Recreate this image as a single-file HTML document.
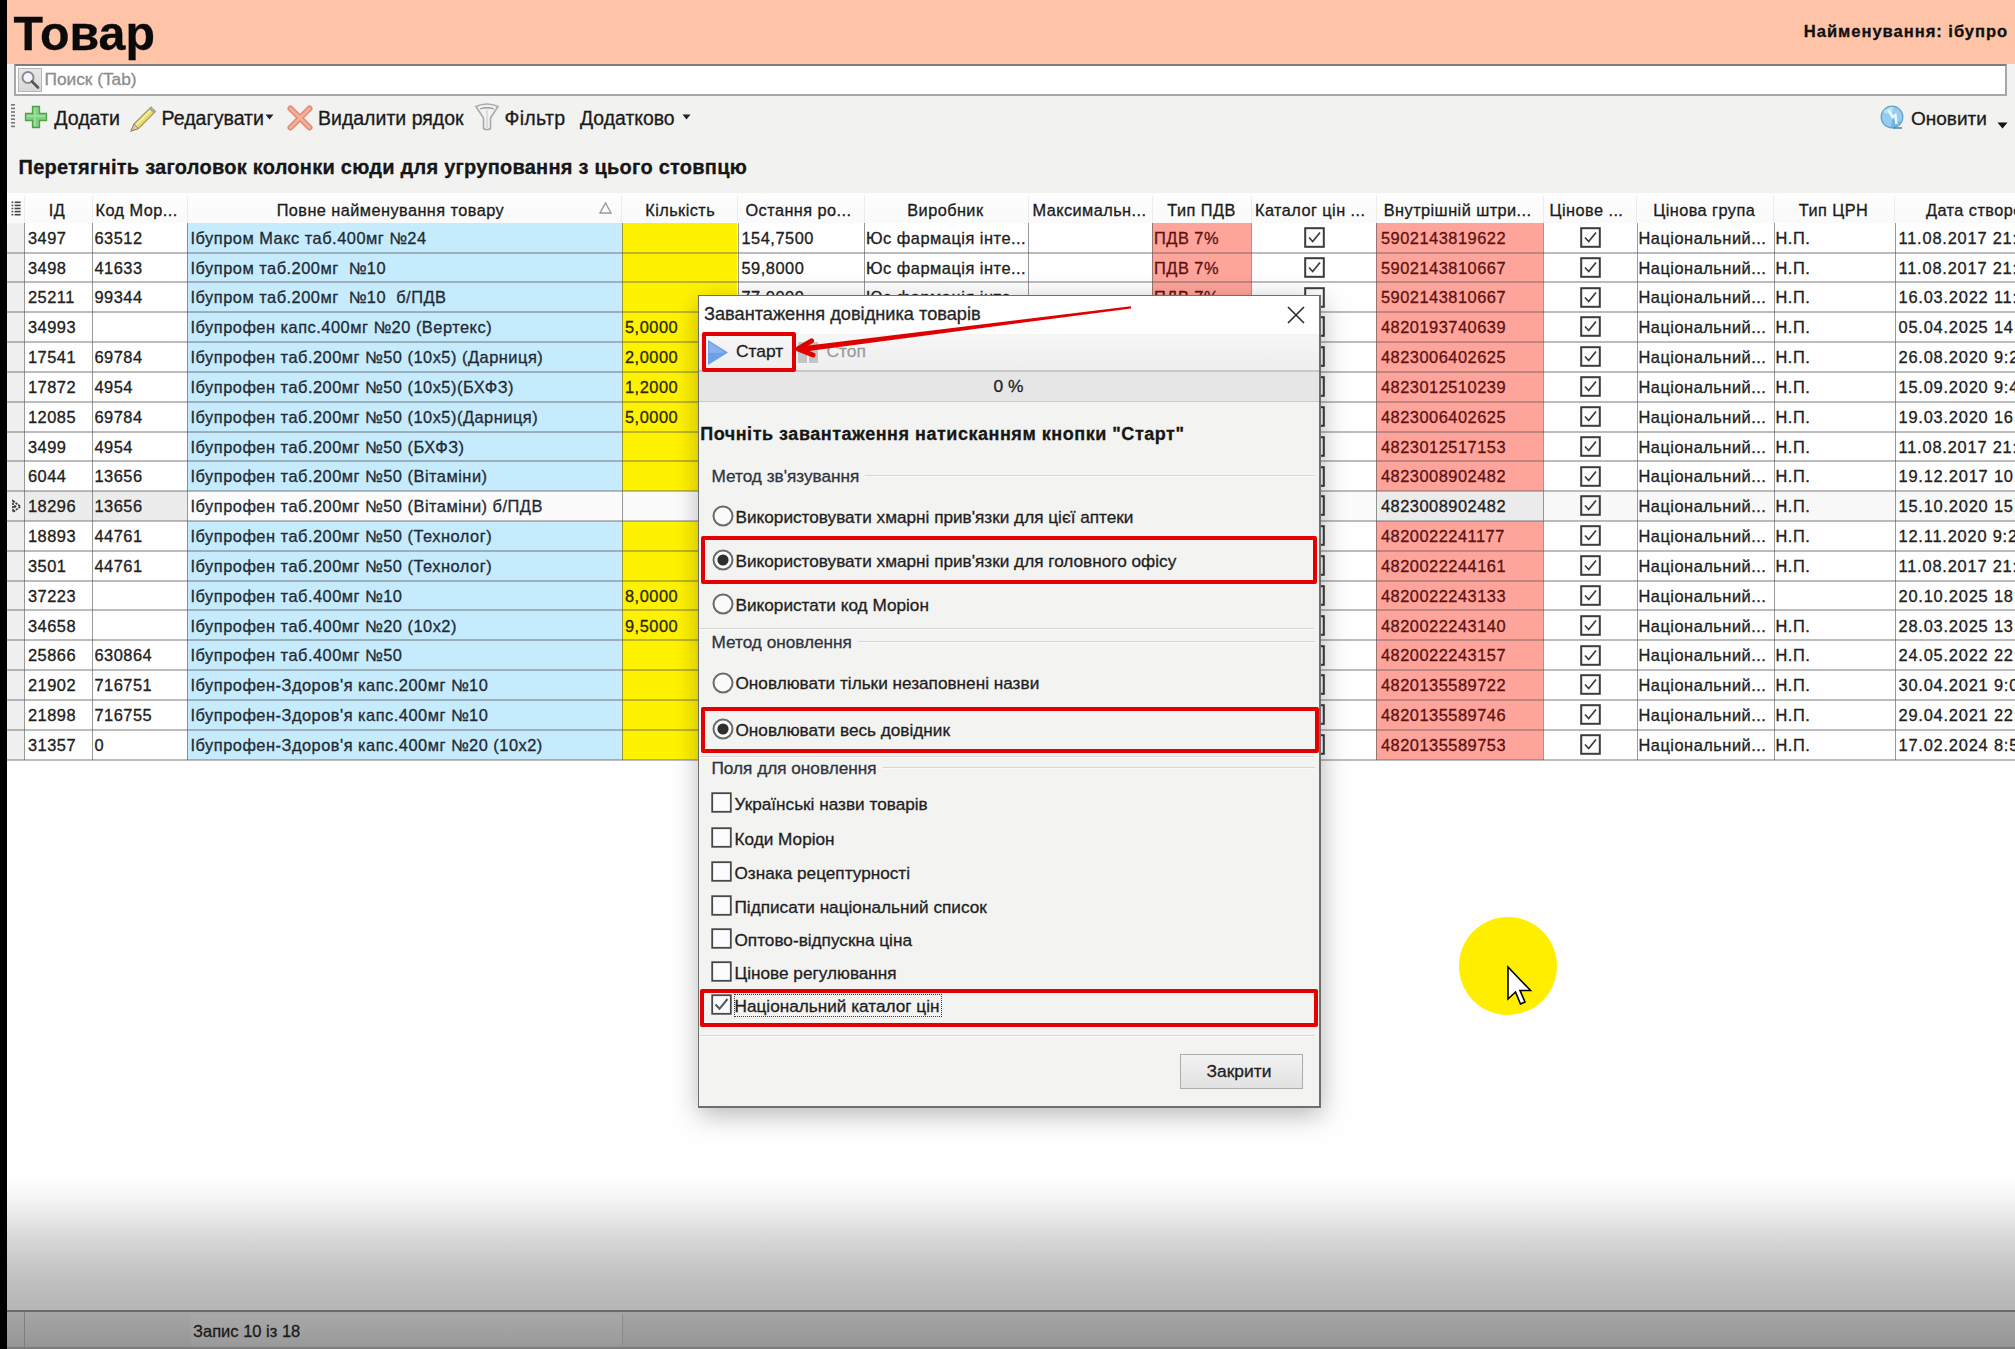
<!DOCTYPE html>
<html><head><meta charset="utf-8"><title>Товар</title>
<style>
html,body{margin:0;padding:0;}
body{width:2015px;height:1349px;position:relative;overflow:hidden;background:#fff;font-family:"Liberation Sans",sans-serif;}
#w{position:absolute;left:0;top:0;width:2015px;height:1349px;overflow:hidden;}
.t{position:absolute;white-space:pre;line-height:1;-webkit-text-stroke:0.3px currentColor;}
.g{-webkit-text-stroke:0.35px currentColor;}
.r{position:absolute;}
svg.r{overflow:visible;}
</style></head><body><div id="w">
<div class="r" style="left:7.00px;top:0.00px;width:2008.00px;height:64.00px;background:#ffc4a8"></div>
<div class="r" style="left:7.00px;top:64.00px;width:2008.00px;height:129.00px;background:#f2f2f1"></div>
<div class="r" style="left:7.00px;top:192.50px;width:2008.00px;height:1118.50px;background:#fefefe"></div>
<div class="r" style="left:7.00px;top:1176.00px;width:2008.00px;height:135.00px;background:linear-gradient(to bottom,#ffffff 0%,#f4f4f4 18%,#dedede 40%,#cacaca 62%,#bdbdbd 82%,#b5b5b5 100%)"></div>
<div class="r" style="left:7.00px;top:1310.00px;width:2008.00px;height:2.40px;background:#6a6a6a"></div>
<div class="r" style="left:7.00px;top:1312.00px;width:2008.00px;height:35.00px;background:linear-gradient(to bottom,#a6a6a6,#959595)"></div>
<div class="r" style="left:7.00px;top:1346.50px;width:2008.00px;height:2.50px;background:#7c7c7c"></div>
<div class="r" style="left:24.00px;top:1312.00px;width:1.20px;height:35.00px;background:#7f7f7f"></div>
<div class="r" style="left:190.50px;top:1314.00px;width:431.00px;height:31.00px;background:linear-gradient(to bottom,#a9a9a9,#9a9a9a);border-right:1px solid #8a8a8a"></div>
<div class="t" style="left:193.00px;top:1322.53px;font-size:16.5px;font-weight:normal;color:#1a1a1a;letter-spacing:0px;">Запис 10 із 18</div>
<div class="t" style="left:13.60px;top:9.11px;font-size:48.3px;font-weight:bold;color:#0a0a0a;letter-spacing:0px;">Товар</div>
<div class="t" style="right:6.80px;top:24.35px;font-size:16.6px;font-weight:bold;color:#111;letter-spacing:0.95px">Найменування: ібупро</div>
<div class="r" style="left:14.00px;top:64.00px;width:1993.00px;height:32.00px;background:#fff;border:2px solid #a8a8a8;border-top-color:#7d7d7d;box-sizing:border-box"></div>
<div class="r" style="left:18.00px;top:68.00px;width:24.00px;height:24.00px;background:linear-gradient(#e8e8e8,#d8d8d8);border:1px solid #b5b5b5;box-sizing:border-box"></div>
<svg class="r" style="left:18px;top:68px" width="24" height="24" viewBox="0 0 24 24"><circle cx="10" cy="9.5" r="5.5" fill="#f4f4ff" stroke="#8a8a8a" stroke-width="2"/><line x1="14" y1="13.5" x2="20" y2="19.5" stroke="#555" stroke-width="2.6" stroke-linecap="round"/></svg>
<div class="t" style="left:44.50px;top:70.66px;font-size:17.3px;font-weight:normal;color:#8c8c8c;letter-spacing:0px;">Поиск (Tab)</div>
<svg class="r" style="left:10px;top:103px" width="8" height="27" viewBox="0 0 8 27"><rect x="1" y="1.0" width="4" height="1.6" fill="#777"/><rect x="1" y="4.6" width="4" height="1.6" fill="#777"/><rect x="1" y="8.2" width="4" height="1.6" fill="#777"/><rect x="1" y="11.8" width="4" height="1.6" fill="#777"/><rect x="1" y="15.4" width="4" height="1.6" fill="#777"/><rect x="1" y="19.0" width="4" height="1.6" fill="#777"/><rect x="1" y="22.6" width="4" height="1.6" fill="#777"/></svg>
<svg class="r" style="left:24px;top:105px" width="24" height="24" viewBox="0 0 24 24"><path d="M8.5 1.5h7v7h7v7h-7v7h-7v-7h-7v-7h7z" fill="#7fd17f" stroke="#4f9f4f" stroke-width="1.3"/><path d="M11 3v18M3 11h18" stroke="#b4ecb4" stroke-width="1.4" opacity=".7"/></svg>
<div class="t" style="left:54.20px;top:108.61px;font-size:19.6px;font-weight:normal;color:#1a1a1a;letter-spacing:0px;">Додати</div>
<svg class="r" style="left:127px;top:103px" width="32" height="30" viewBox="0 0 32 30"><path d="M7 21 L24 4 L28.5 8.5 L11.5 25.5 L4 28 Z" fill="#eedc6a" stroke="#9e9462" stroke-width="1.1"/><path d="M8.5 22.5 L25.5 5.5" stroke="#f8f0a8" stroke-width="1.6"/><path d="M4 28 L7 21 L11.5 25.5 Z" fill="#dcc8a8" stroke="#8a7a60" stroke-width="0.8"/><path d="M23 5 L27.5 9.5" stroke="#a8a8a8" stroke-width="2.6"/></svg>
<div class="t" style="left:161.50px;top:108.61px;font-size:19.6px;font-weight:normal;color:#1a1a1a;letter-spacing:0px;">Редагувати</div>
<svg class="r" style="left:265px;top:114px" width="9" height="6" viewBox="0 0 9 6"><path d="M0.5 0.5h8L4.5 5.5z" fill="#222"/></svg>
<svg class="r" style="left:287px;top:105px" width="26" height="26" viewBox="0 0 26 26"><path d="M3.5 3.5 L22.5 22.5 M22.5 3.5 L3.5 22.5" stroke="#de8a74" stroke-width="6" stroke-linecap="round"/><path d="M3.5 3.5 L22.5 22.5 M22.5 3.5 L3.5 22.5" stroke="#f6ae98" stroke-width="3" stroke-linecap="round"/></svg>
<div class="t" style="left:318.00px;top:108.69px;font-size:19.5px;font-weight:normal;color:#1a1a1a;letter-spacing:0px;">Видалити рядок</div>
<svg class="r" style="left:474px;top:102px" width="26" height="30" viewBox="0 0 26 30"><path d="M2 4.5 Q13 -0.5 24 4.5 L16.5 16 L16.5 26.5 Q13 29 9.5 26.5 L9.5 16 Z" fill="#f2f2f2" stroke="#a9a9a9" stroke-width="1.6"/><path d="M6 7 Q13 4.5 20 7" fill="none" stroke="#9a9a9a" stroke-width="1.3"/><path d="M13 8 L13 26" stroke="#dcdcdc" stroke-width="2"/></svg>
<div class="t" style="left:504.50px;top:108.61px;font-size:19.6px;font-weight:normal;color:#1a1a1a;letter-spacing:0.3px;">Фільтр</div>
<div class="t" style="left:580.00px;top:108.78px;font-size:19.4px;font-weight:normal;color:#1a1a1a;letter-spacing:0px;">Додатково</div>
<svg class="r" style="left:682px;top:114px" width="9" height="6" viewBox="0 0 9 6"><path d="M0.5 0.5h8L4.5 5.5z" fill="#222"/></svg>
<svg class="r" style="left:1879px;top:104px" width="26" height="26" viewBox="0 0 26 26"><circle cx="13" cy="13" r="10.8" fill="#94cdee" stroke="#6aa2c4" stroke-width="1.3"/><path d="M4 8 Q8 3 14 3 L13 11 Z" fill="#b4e2fb"/><path d="M22 18 Q18 23 12 23 L13 15 Z" fill="#6fb6e4"/><path d="M9.5 6 L13.5 13 L16.5 11 L17.5 20" stroke="#eef8ff" stroke-width="2.4" fill="none"/><path d="M14 24 L23 24" stroke="#4f8aa8" stroke-width="1.6"/></svg>
<div class="t" style="left:1911.00px;top:109.12px;font-size:19px;font-weight:normal;color:#1a1a1a;letter-spacing:0px;">Оновити</div>
<svg class="r" style="left:1997px;top:122px" width="11" height="7" viewBox="0 0 11 7"><path d="M0.5 0.5h10L5.5 6.5z" fill="#111"/></svg>
<div class="t" style="left:18.50px;top:156.97px;font-size:20px;font-weight:bold;color:#161616;letter-spacing:0.25px;">Перетягніть заголовок колонки сюди для угруповання з цього стовпцю</div>
<div class="r" style="left:7.00px;top:192.50px;width:2008.00px;height:30.40px;background:linear-gradient(#fdfdfd,#fafafa)"></div>
<div class="r" style="left:23.50px;top:195.50px;width:1.00px;height:27.40px;background:#ececec"></div>
<div class="r" style="left:91.50px;top:195.50px;width:1.00px;height:27.40px;background:#ececec"></div>
<div class="r" style="left:186.50px;top:195.50px;width:1.00px;height:27.40px;background:#ececec"></div>
<div class="r" style="left:621.10px;top:195.50px;width:1.00px;height:27.40px;background:#ececec"></div>
<div class="r" style="left:737.00px;top:195.50px;width:1.00px;height:27.40px;background:#ececec"></div>
<div class="r" style="left:863.50px;top:195.50px;width:1.00px;height:27.40px;background:#ececec"></div>
<div class="r" style="left:1027.70px;top:195.50px;width:1.00px;height:27.40px;background:#ececec"></div>
<div class="r" style="left:1151.70px;top:195.50px;width:1.00px;height:27.40px;background:#ececec"></div>
<div class="r" style="left:1250.50px;top:195.50px;width:1.00px;height:27.40px;background:#ececec"></div>
<div class="r" style="left:1375.70px;top:195.50px;width:1.00px;height:27.40px;background:#ececec"></div>
<div class="r" style="left:1542.50px;top:195.50px;width:1.00px;height:27.40px;background:#ececec"></div>
<div class="r" style="left:1636.10px;top:195.50px;width:1.00px;height:27.40px;background:#ececec"></div>
<div class="r" style="left:1773.20px;top:195.50px;width:1.00px;height:27.40px;background:#ececec"></div>
<div class="r" style="left:1894.20px;top:195.50px;width:1.00px;height:27.40px;background:#ececec"></div>
<div class="t" style="left:-243.00px;width:600px;text-align:center;top:201.50px;font-size:16.3px;font-weight:normal;color:#1a1a1a;letter-spacing:0.45px">ІД</div>
<div class="t" style="left:95.50px;top:201.50px;font-size:16.3px;font-weight:normal;color:#1a1a1a;letter-spacing:0.45px;">Код Мор...</div>
<div class="t" style="left:90.40px;width:600px;text-align:center;top:201.50px;font-size:16.3px;font-weight:normal;color:#1a1a1a;letter-spacing:0.45px">Повне найменування товару</div>
<svg class="r" style="left:599px;top:202px" width="13" height="12" viewBox="0 0 13 12"><path d="M6.5 1 L12 11 L1 11 Z" fill="none" stroke="#9a9a9a" stroke-width="1.4"/></svg>
<div class="t" style="left:380.20px;width:600px;text-align:center;top:201.50px;font-size:16.3px;font-weight:normal;color:#1a1a1a;letter-spacing:0.45px">Кількість</div>
<div class="t" style="left:745.50px;top:201.50px;font-size:16.3px;font-weight:normal;color:#1a1a1a;letter-spacing:0.45px;">Остання ро...</div>
<div class="t" style="left:645.40px;width:600px;text-align:center;top:201.50px;font-size:16.3px;font-weight:normal;color:#1a1a1a;letter-spacing:0.45px">Виробник</div>
<div class="t" style="left:1032.50px;top:201.50px;font-size:16.3px;font-weight:normal;color:#1a1a1a;letter-spacing:0.45px;">Максимальн...</div>
<div class="t" style="left:901.50px;width:600px;text-align:center;top:201.50px;font-size:16.3px;font-weight:normal;color:#1a1a1a;letter-spacing:0.45px">Тип ПДВ</div>
<div class="t" style="left:1255.00px;top:201.50px;font-size:16.3px;font-weight:normal;color:#1a1a1a;letter-spacing:0.45px;">Каталог цін ...</div>
<div class="t" style="left:1383.80px;top:201.50px;font-size:16.3px;font-weight:normal;color:#1a1a1a;letter-spacing:0.45px;">Внутрішній штри...</div>
<div class="t" style="left:1549.50px;top:201.50px;font-size:16.3px;font-weight:normal;color:#1a1a1a;letter-spacing:0.45px;">Цінове ...</div>
<div class="t" style="left:1404.20px;width:600px;text-align:center;top:201.50px;font-size:16.3px;font-weight:normal;color:#1a1a1a;letter-spacing:0.45px">Цінова група</div>
<div class="t" style="left:1533.50px;width:600px;text-align:center;top:201.50px;font-size:16.3px;font-weight:normal;color:#1a1a1a;letter-spacing:0.45px">Тип ЦРН</div>
<div class="t" style="left:1926.00px;top:201.50px;font-size:16.3px;font-weight:normal;color:#1a1a1a;letter-spacing:0.45px;">Дата створення</div>
<svg class="r" style="left:11px;top:201px" width="11" height="16" viewBox="0 0 11 16"><rect x="0.5" y="0.5" width="1.8" height="1.6" fill="#555"/><rect x="3.6" y="0.5" width="6" height="1.6" fill="#444"/><rect x="0.5" y="3.6" width="1.8" height="1.6" fill="#555"/><rect x="3.6" y="3.6" width="6" height="1.6" fill="#444"/><rect x="0.5" y="6.7" width="1.8" height="1.6" fill="#555"/><rect x="3.6" y="6.7" width="6" height="1.6" fill="#444"/><rect x="0.5" y="9.8" width="1.8" height="1.6" fill="#555"/><rect x="3.6" y="9.8" width="6" height="1.6" fill="#444"/><rect x="0.5" y="12.9" width="1.8" height="1.6" fill="#555"/><rect x="3.6" y="12.9" width="6" height="1.6" fill="#444"/></svg>
<div class="r" style="left:7.00px;top:222.90px;width:17.00px;height:29.83px;background:#f0f0f0"></div>
<div class="r" style="left:187.00px;top:222.90px;width:434.60px;height:29.83px;background:#c5ebfd"></div>
<div class="r" style="left:621.60px;top:222.90px;width:115.90px;height:29.83px;background:#fff200"></div>
<div class="r" style="left:1376.20px;top:222.90px;width:166.80px;height:29.83px;background:#ffa49a"></div>
<div class="r" style="left:1152.20px;top:222.90px;width:98.80px;height:29.83px;background:#ffa49a"></div>
<div class="t" style="left:28.00px;top:229.82px;font-size:16.4px;font-weight:normal;color:#202020;letter-spacing:0.5px;">3497</div>
<div class="t" style="left:94.50px;top:229.82px;font-size:16.4px;font-weight:normal;color:#202020;letter-spacing:0.5px;">63512</div>
<div class="t" style="left:190.50px;top:229.82px;font-size:16.4px;font-weight:normal;color:#1e2a34;letter-spacing:0.5px;">Ібупром Макс таб.400мг №24</div>
<div class="t" style="left:741.50px;top:229.82px;font-size:16.4px;font-weight:normal;color:#202020;letter-spacing:0.5px;">154,7500</div>
<div class="t" style="left:866.00px;top:229.82px;font-size:16.4px;font-weight:normal;color:#202020;letter-spacing:0.5px;">Юс фармація інте...</div>
<div class="t" style="left:1154.00px;top:229.82px;font-size:16.4px;font-weight:normal;color:#5c1212;letter-spacing:0.5px;">ПДВ 7%</div>
<svg class="r" style="left:1303.50px;top:226.90px" width="21" height="21" viewBox="0 0 21 21"><rect x="1.2" y="1.2" width="18.6" height="18.6" fill="none" stroke="#3c3c3c" stroke-width="2"/><path d="M5 10.5 L8.7 14.5 L16 5.5" fill="none" stroke="#3c3c3c" stroke-width="1.7"/></svg>
<div class="t" style="left:1381.00px;top:229.82px;font-size:16.4px;font-weight:normal;color:#5c1212;letter-spacing:0.5px;">5902143819622</div>
<svg class="r" style="left:1579.50px;top:226.90px" width="21" height="21" viewBox="0 0 21 21"><rect x="1.2" y="1.2" width="18.6" height="18.6" fill="none" stroke="#3c3c3c" stroke-width="2"/><path d="M5 10.5 L8.7 14.5 L16 5.5" fill="none" stroke="#3c3c3c" stroke-width="1.7"/></svg>
<div class="t" style="left:1638.50px;top:229.82px;font-size:16.4px;font-weight:normal;color:#202020;letter-spacing:0.5px;">Національний...</div>
<div class="t" style="left:1775.50px;top:229.82px;font-size:16.4px;font-weight:normal;color:#202020;letter-spacing:0.5px;">Н.П.</div>
<div class="t" style="left:1898.50px;top:229.82px;font-size:16.4px;font-weight:normal;color:#202020;letter-spacing:0.8px;">11.08.2017 21:18</div>
<div class="r" style="left:7.00px;top:252.73px;width:17.00px;height:29.83px;background:#f0f0f0"></div>
<div class="r" style="left:187.00px;top:252.73px;width:434.60px;height:29.83px;background:#c5ebfd"></div>
<div class="r" style="left:621.60px;top:252.73px;width:115.90px;height:29.83px;background:#fff200"></div>
<div class="r" style="left:1376.20px;top:252.73px;width:166.80px;height:29.83px;background:#ffa49a"></div>
<div class="r" style="left:1152.20px;top:252.73px;width:98.80px;height:29.83px;background:#ffa49a"></div>
<div class="t" style="left:28.00px;top:259.65px;font-size:16.4px;font-weight:normal;color:#202020;letter-spacing:0.5px;">3498</div>
<div class="t" style="left:94.50px;top:259.65px;font-size:16.4px;font-weight:normal;color:#202020;letter-spacing:0.5px;">41633</div>
<div class="t" style="left:190.50px;top:259.65px;font-size:16.4px;font-weight:normal;color:#1e2a34;letter-spacing:0.5px;">Ібупром таб.200мг  №10</div>
<div class="t" style="left:741.50px;top:259.65px;font-size:16.4px;font-weight:normal;color:#202020;letter-spacing:0.5px;">59,8000</div>
<div class="t" style="left:866.00px;top:259.65px;font-size:16.4px;font-weight:normal;color:#202020;letter-spacing:0.5px;">Юс фармація інте...</div>
<div class="t" style="left:1154.00px;top:259.65px;font-size:16.4px;font-weight:normal;color:#5c1212;letter-spacing:0.5px;">ПДВ 7%</div>
<svg class="r" style="left:1303.50px;top:256.73px" width="21" height="21" viewBox="0 0 21 21"><rect x="1.2" y="1.2" width="18.6" height="18.6" fill="none" stroke="#3c3c3c" stroke-width="2"/><path d="M5 10.5 L8.7 14.5 L16 5.5" fill="none" stroke="#3c3c3c" stroke-width="1.7"/></svg>
<div class="t" style="left:1381.00px;top:259.65px;font-size:16.4px;font-weight:normal;color:#5c1212;letter-spacing:0.5px;">5902143810667</div>
<svg class="r" style="left:1579.50px;top:256.73px" width="21" height="21" viewBox="0 0 21 21"><rect x="1.2" y="1.2" width="18.6" height="18.6" fill="none" stroke="#3c3c3c" stroke-width="2"/><path d="M5 10.5 L8.7 14.5 L16 5.5" fill="none" stroke="#3c3c3c" stroke-width="1.7"/></svg>
<div class="t" style="left:1638.50px;top:259.65px;font-size:16.4px;font-weight:normal;color:#202020;letter-spacing:0.5px;">Національний...</div>
<div class="t" style="left:1775.50px;top:259.65px;font-size:16.4px;font-weight:normal;color:#202020;letter-spacing:0.5px;">Н.П.</div>
<div class="t" style="left:1898.50px;top:259.65px;font-size:16.4px;font-weight:normal;color:#202020;letter-spacing:0.8px;">11.08.2017 21:18</div>
<div class="r" style="left:7.00px;top:282.56px;width:17.00px;height:29.83px;background:#f0f0f0"></div>
<div class="r" style="left:187.00px;top:282.56px;width:434.60px;height:29.83px;background:#c5ebfd"></div>
<div class="r" style="left:621.60px;top:282.56px;width:115.90px;height:29.83px;background:#fff200"></div>
<div class="r" style="left:1376.20px;top:282.56px;width:166.80px;height:29.83px;background:#ffa49a"></div>
<div class="r" style="left:1152.20px;top:282.56px;width:98.80px;height:29.83px;background:#ffa49a"></div>
<div class="t" style="left:28.00px;top:289.48px;font-size:16.4px;font-weight:normal;color:#202020;letter-spacing:0.5px;">25211</div>
<div class="t" style="left:94.50px;top:289.48px;font-size:16.4px;font-weight:normal;color:#202020;letter-spacing:0.5px;">99344</div>
<div class="t" style="left:190.50px;top:289.48px;font-size:16.4px;font-weight:normal;color:#1e2a34;letter-spacing:0.5px;">Ібупром таб.200мг  №10  б/ПДВ</div>
<div class="t" style="left:741.50px;top:289.48px;font-size:16.4px;font-weight:normal;color:#202020;letter-spacing:0.5px;">77,0000</div>
<div class="t" style="left:866.00px;top:289.48px;font-size:16.4px;font-weight:normal;color:#202020;letter-spacing:0.5px;">Юс фармація інте...</div>
<div class="t" style="left:1154.00px;top:289.48px;font-size:16.4px;font-weight:normal;color:#5c1212;letter-spacing:0.5px;">ПДВ 7%</div>
<svg class="r" style="left:1303.50px;top:286.56px" width="21" height="21" viewBox="0 0 21 21"><rect x="1.2" y="1.2" width="18.6" height="18.6" fill="none" stroke="#3c3c3c" stroke-width="2"/></svg>
<div class="t" style="left:1381.00px;top:289.48px;font-size:16.4px;font-weight:normal;color:#5c1212;letter-spacing:0.5px;">5902143810667</div>
<svg class="r" style="left:1579.50px;top:286.56px" width="21" height="21" viewBox="0 0 21 21"><rect x="1.2" y="1.2" width="18.6" height="18.6" fill="none" stroke="#3c3c3c" stroke-width="2"/><path d="M5 10.5 L8.7 14.5 L16 5.5" fill="none" stroke="#3c3c3c" stroke-width="1.7"/></svg>
<div class="t" style="left:1638.50px;top:289.48px;font-size:16.4px;font-weight:normal;color:#202020;letter-spacing:0.5px;">Національний...</div>
<div class="t" style="left:1775.50px;top:289.48px;font-size:16.4px;font-weight:normal;color:#202020;letter-spacing:0.5px;">Н.П.</div>
<div class="t" style="left:1898.50px;top:289.48px;font-size:16.4px;font-weight:normal;color:#202020;letter-spacing:0.8px;">16.03.2022 11:20</div>
<div class="r" style="left:7.00px;top:312.39px;width:17.00px;height:29.83px;background:#f0f0f0"></div>
<div class="r" style="left:187.00px;top:312.39px;width:434.60px;height:29.83px;background:#c5ebfd"></div>
<div class="r" style="left:621.60px;top:312.39px;width:115.90px;height:29.83px;background:#fff200"></div>
<div class="r" style="left:1376.20px;top:312.39px;width:166.80px;height:29.83px;background:#ffa49a"></div>
<div class="t" style="left:28.00px;top:319.31px;font-size:16.4px;font-weight:normal;color:#202020;letter-spacing:0.5px;">34993</div>
<div class="t" style="left:94.50px;top:319.31px;font-size:16.4px;font-weight:normal;color:#202020;letter-spacing:0.5px;"></div>
<div class="t" style="left:190.50px;top:319.31px;font-size:16.4px;font-weight:normal;color:#1e2a34;letter-spacing:0.5px;">Ібупрофен капс.400мг №20 (Вертекс)</div>
<div class="t" style="left:625.00px;top:319.31px;font-size:16.4px;font-weight:normal;color:#2a2a00;letter-spacing:0.5px;">5,0000</div>
<svg class="r" style="left:1303.50px;top:316.39px" width="21" height="21" viewBox="0 0 21 21"><rect x="1.2" y="1.2" width="18.6" height="18.6" fill="none" stroke="#3c3c3c" stroke-width="2"/><path d="M5 10.5 L8.7 14.5 L16 5.5" fill="none" stroke="#3c3c3c" stroke-width="1.7"/></svg>
<div class="t" style="left:1381.00px;top:319.31px;font-size:16.4px;font-weight:normal;color:#5c1212;letter-spacing:0.5px;">4820193740639</div>
<svg class="r" style="left:1579.50px;top:316.39px" width="21" height="21" viewBox="0 0 21 21"><rect x="1.2" y="1.2" width="18.6" height="18.6" fill="none" stroke="#3c3c3c" stroke-width="2"/><path d="M5 10.5 L8.7 14.5 L16 5.5" fill="none" stroke="#3c3c3c" stroke-width="1.7"/></svg>
<div class="t" style="left:1638.50px;top:319.31px;font-size:16.4px;font-weight:normal;color:#202020;letter-spacing:0.5px;">Національний...</div>
<div class="t" style="left:1775.50px;top:319.31px;font-size:16.4px;font-weight:normal;color:#202020;letter-spacing:0.5px;">Н.П.</div>
<div class="t" style="left:1898.50px;top:319.31px;font-size:16.4px;font-weight:normal;color:#202020;letter-spacing:0.8px;">05.04.2025 14:20</div>
<div class="r" style="left:7.00px;top:342.22px;width:17.00px;height:29.83px;background:#f0f0f0"></div>
<div class="r" style="left:187.00px;top:342.22px;width:434.60px;height:29.83px;background:#c5ebfd"></div>
<div class="r" style="left:621.60px;top:342.22px;width:115.90px;height:29.83px;background:#fff200"></div>
<div class="r" style="left:1376.20px;top:342.22px;width:166.80px;height:29.83px;background:#ffa49a"></div>
<div class="t" style="left:28.00px;top:349.14px;font-size:16.4px;font-weight:normal;color:#202020;letter-spacing:0.5px;">17541</div>
<div class="t" style="left:94.50px;top:349.14px;font-size:16.4px;font-weight:normal;color:#202020;letter-spacing:0.5px;">69784</div>
<div class="t" style="left:190.50px;top:349.14px;font-size:16.4px;font-weight:normal;color:#1e2a34;letter-spacing:0.5px;">Ібупрофен таб.200мг №50 (10х5) (Дарниця)</div>
<div class="t" style="left:625.00px;top:349.14px;font-size:16.4px;font-weight:normal;color:#2a2a00;letter-spacing:0.5px;">2,0000</div>
<svg class="r" style="left:1303.50px;top:346.22px" width="21" height="21" viewBox="0 0 21 21"><rect x="1.2" y="1.2" width="18.6" height="18.6" fill="none" stroke="#3c3c3c" stroke-width="2"/><path d="M5 10.5 L8.7 14.5 L16 5.5" fill="none" stroke="#3c3c3c" stroke-width="1.7"/></svg>
<div class="t" style="left:1381.00px;top:349.14px;font-size:16.4px;font-weight:normal;color:#5c1212;letter-spacing:0.5px;">4823006402625</div>
<svg class="r" style="left:1579.50px;top:346.22px" width="21" height="21" viewBox="0 0 21 21"><rect x="1.2" y="1.2" width="18.6" height="18.6" fill="none" stroke="#3c3c3c" stroke-width="2"/><path d="M5 10.5 L8.7 14.5 L16 5.5" fill="none" stroke="#3c3c3c" stroke-width="1.7"/></svg>
<div class="t" style="left:1638.50px;top:349.14px;font-size:16.4px;font-weight:normal;color:#202020;letter-spacing:0.5px;">Національний...</div>
<div class="t" style="left:1775.50px;top:349.14px;font-size:16.4px;font-weight:normal;color:#202020;letter-spacing:0.5px;">Н.П.</div>
<div class="t" style="left:1898.50px;top:349.14px;font-size:16.4px;font-weight:normal;color:#202020;letter-spacing:0.8px;">26.08.2020 9:20</div>
<div class="r" style="left:7.00px;top:372.05px;width:17.00px;height:29.83px;background:#f0f0f0"></div>
<div class="r" style="left:187.00px;top:372.05px;width:434.60px;height:29.83px;background:#c5ebfd"></div>
<div class="r" style="left:621.60px;top:372.05px;width:115.90px;height:29.83px;background:#fff200"></div>
<div class="r" style="left:1376.20px;top:372.05px;width:166.80px;height:29.83px;background:#ffa49a"></div>
<div class="t" style="left:28.00px;top:378.97px;font-size:16.4px;font-weight:normal;color:#202020;letter-spacing:0.5px;">17872</div>
<div class="t" style="left:94.50px;top:378.97px;font-size:16.4px;font-weight:normal;color:#202020;letter-spacing:0.5px;">4954</div>
<div class="t" style="left:190.50px;top:378.97px;font-size:16.4px;font-weight:normal;color:#1e2a34;letter-spacing:0.5px;">Ібупрофен таб.200мг №50 (10х5)(БХФЗ)</div>
<div class="t" style="left:625.00px;top:378.97px;font-size:16.4px;font-weight:normal;color:#2a2a00;letter-spacing:0.5px;">1,2000</div>
<svg class="r" style="left:1303.50px;top:376.05px" width="21" height="21" viewBox="0 0 21 21"><rect x="1.2" y="1.2" width="18.6" height="18.6" fill="none" stroke="#3c3c3c" stroke-width="2"/><path d="M5 10.5 L8.7 14.5 L16 5.5" fill="none" stroke="#3c3c3c" stroke-width="1.7"/></svg>
<div class="t" style="left:1381.00px;top:378.97px;font-size:16.4px;font-weight:normal;color:#5c1212;letter-spacing:0.5px;">4823012510239</div>
<svg class="r" style="left:1579.50px;top:376.05px" width="21" height="21" viewBox="0 0 21 21"><rect x="1.2" y="1.2" width="18.6" height="18.6" fill="none" stroke="#3c3c3c" stroke-width="2"/><path d="M5 10.5 L8.7 14.5 L16 5.5" fill="none" stroke="#3c3c3c" stroke-width="1.7"/></svg>
<div class="t" style="left:1638.50px;top:378.97px;font-size:16.4px;font-weight:normal;color:#202020;letter-spacing:0.5px;">Національний...</div>
<div class="t" style="left:1775.50px;top:378.97px;font-size:16.4px;font-weight:normal;color:#202020;letter-spacing:0.5px;">Н.П.</div>
<div class="t" style="left:1898.50px;top:378.97px;font-size:16.4px;font-weight:normal;color:#202020;letter-spacing:0.8px;">15.09.2020 9:40</div>
<div class="r" style="left:7.00px;top:401.88px;width:17.00px;height:29.83px;background:#f0f0f0"></div>
<div class="r" style="left:187.00px;top:401.88px;width:434.60px;height:29.83px;background:#c5ebfd"></div>
<div class="r" style="left:621.60px;top:401.88px;width:115.90px;height:29.83px;background:#fff200"></div>
<div class="r" style="left:1376.20px;top:401.88px;width:166.80px;height:29.83px;background:#ffa49a"></div>
<div class="t" style="left:28.00px;top:408.80px;font-size:16.4px;font-weight:normal;color:#202020;letter-spacing:0.5px;">12085</div>
<div class="t" style="left:94.50px;top:408.80px;font-size:16.4px;font-weight:normal;color:#202020;letter-spacing:0.5px;">69784</div>
<div class="t" style="left:190.50px;top:408.80px;font-size:16.4px;font-weight:normal;color:#1e2a34;letter-spacing:0.5px;">Ібупрофен таб.200мг №50 (10х5)(Дарниця)</div>
<div class="t" style="left:625.00px;top:408.80px;font-size:16.4px;font-weight:normal;color:#2a2a00;letter-spacing:0.5px;">5,0000</div>
<svg class="r" style="left:1303.50px;top:405.88px" width="21" height="21" viewBox="0 0 21 21"><rect x="1.2" y="1.2" width="18.6" height="18.6" fill="none" stroke="#3c3c3c" stroke-width="2"/><path d="M5 10.5 L8.7 14.5 L16 5.5" fill="none" stroke="#3c3c3c" stroke-width="1.7"/></svg>
<div class="t" style="left:1381.00px;top:408.80px;font-size:16.4px;font-weight:normal;color:#5c1212;letter-spacing:0.5px;">4823006402625</div>
<svg class="r" style="left:1579.50px;top:405.88px" width="21" height="21" viewBox="0 0 21 21"><rect x="1.2" y="1.2" width="18.6" height="18.6" fill="none" stroke="#3c3c3c" stroke-width="2"/><path d="M5 10.5 L8.7 14.5 L16 5.5" fill="none" stroke="#3c3c3c" stroke-width="1.7"/></svg>
<div class="t" style="left:1638.50px;top:408.80px;font-size:16.4px;font-weight:normal;color:#202020;letter-spacing:0.5px;">Національний...</div>
<div class="t" style="left:1775.50px;top:408.80px;font-size:16.4px;font-weight:normal;color:#202020;letter-spacing:0.5px;">Н.П.</div>
<div class="t" style="left:1898.50px;top:408.80px;font-size:16.4px;font-weight:normal;color:#202020;letter-spacing:0.8px;">19.03.2020 16:20</div>
<div class="r" style="left:7.00px;top:431.71px;width:17.00px;height:29.83px;background:#f0f0f0"></div>
<div class="r" style="left:187.00px;top:431.71px;width:434.60px;height:29.83px;background:#c5ebfd"></div>
<div class="r" style="left:621.60px;top:431.71px;width:115.90px;height:29.83px;background:#fff200"></div>
<div class="r" style="left:1376.20px;top:431.71px;width:166.80px;height:29.83px;background:#ffa49a"></div>
<div class="t" style="left:28.00px;top:438.63px;font-size:16.4px;font-weight:normal;color:#202020;letter-spacing:0.5px;">3499</div>
<div class="t" style="left:94.50px;top:438.63px;font-size:16.4px;font-weight:normal;color:#202020;letter-spacing:0.5px;">4954</div>
<div class="t" style="left:190.50px;top:438.63px;font-size:16.4px;font-weight:normal;color:#1e2a34;letter-spacing:0.5px;">Ібупрофен таб.200мг №50 (БХФЗ)</div>
<svg class="r" style="left:1303.50px;top:435.71px" width="21" height="21" viewBox="0 0 21 21"><rect x="1.2" y="1.2" width="18.6" height="18.6" fill="none" stroke="#3c3c3c" stroke-width="2"/><path d="M5 10.5 L8.7 14.5 L16 5.5" fill="none" stroke="#3c3c3c" stroke-width="1.7"/></svg>
<div class="t" style="left:1381.00px;top:438.63px;font-size:16.4px;font-weight:normal;color:#5c1212;letter-spacing:0.5px;">4823012517153</div>
<svg class="r" style="left:1579.50px;top:435.71px" width="21" height="21" viewBox="0 0 21 21"><rect x="1.2" y="1.2" width="18.6" height="18.6" fill="none" stroke="#3c3c3c" stroke-width="2"/><path d="M5 10.5 L8.7 14.5 L16 5.5" fill="none" stroke="#3c3c3c" stroke-width="1.7"/></svg>
<div class="t" style="left:1638.50px;top:438.63px;font-size:16.4px;font-weight:normal;color:#202020;letter-spacing:0.5px;">Національний...</div>
<div class="t" style="left:1775.50px;top:438.63px;font-size:16.4px;font-weight:normal;color:#202020;letter-spacing:0.5px;">Н.П.</div>
<div class="t" style="left:1898.50px;top:438.63px;font-size:16.4px;font-weight:normal;color:#202020;letter-spacing:0.8px;">11.08.2017 21:18</div>
<div class="r" style="left:7.00px;top:461.54px;width:17.00px;height:29.83px;background:#f0f0f0"></div>
<div class="r" style="left:187.00px;top:461.54px;width:434.60px;height:29.83px;background:#c5ebfd"></div>
<div class="r" style="left:621.60px;top:461.54px;width:115.90px;height:29.83px;background:#fff200"></div>
<div class="r" style="left:1376.20px;top:461.54px;width:166.80px;height:29.83px;background:#ffa49a"></div>
<div class="t" style="left:28.00px;top:468.46px;font-size:16.4px;font-weight:normal;color:#202020;letter-spacing:0.5px;">6044</div>
<div class="t" style="left:94.50px;top:468.46px;font-size:16.4px;font-weight:normal;color:#202020;letter-spacing:0.5px;">13656</div>
<div class="t" style="left:190.50px;top:468.46px;font-size:16.4px;font-weight:normal;color:#1e2a34;letter-spacing:0.5px;">Ібупрофен таб.200мг №50 (Вітаміни)</div>
<svg class="r" style="left:1303.50px;top:465.54px" width="21" height="21" viewBox="0 0 21 21"><rect x="1.2" y="1.2" width="18.6" height="18.6" fill="none" stroke="#3c3c3c" stroke-width="2"/><path d="M5 10.5 L8.7 14.5 L16 5.5" fill="none" stroke="#3c3c3c" stroke-width="1.7"/></svg>
<div class="t" style="left:1381.00px;top:468.46px;font-size:16.4px;font-weight:normal;color:#5c1212;letter-spacing:0.5px;">4823008902482</div>
<svg class="r" style="left:1579.50px;top:465.54px" width="21" height="21" viewBox="0 0 21 21"><rect x="1.2" y="1.2" width="18.6" height="18.6" fill="none" stroke="#3c3c3c" stroke-width="2"/><path d="M5 10.5 L8.7 14.5 L16 5.5" fill="none" stroke="#3c3c3c" stroke-width="1.7"/></svg>
<div class="t" style="left:1638.50px;top:468.46px;font-size:16.4px;font-weight:normal;color:#202020;letter-spacing:0.5px;">Національний...</div>
<div class="t" style="left:1775.50px;top:468.46px;font-size:16.4px;font-weight:normal;color:#202020;letter-spacing:0.5px;">Н.П.</div>
<div class="t" style="left:1898.50px;top:468.46px;font-size:16.4px;font-weight:normal;color:#202020;letter-spacing:0.8px;">19.12.2017 10:20</div>
<div class="r" style="left:7.00px;top:491.37px;width:17.00px;height:29.83px;background:#f0f0f0"></div>
<div class="r" style="left:24.00px;top:491.37px;width:163.00px;height:29.83px;background:#ececec"></div>
<div class="r" style="left:187.00px;top:491.37px;width:1189.00px;height:29.83px;background:#fbfbfb"></div>
<div class="r" style="left:1376.20px;top:491.37px;width:166.80px;height:29.83px;background:#ebebeb"></div>
<div class="r" style="left:1543.00px;top:491.37px;width:472.00px;height:29.83px;background:#f8f8f8"></div>
<div class="t" style="left:28.00px;top:498.29px;font-size:16.4px;font-weight:normal;color:#202020;letter-spacing:0.5px;">18296</div>
<div class="t" style="left:94.50px;top:498.29px;font-size:16.4px;font-weight:normal;color:#202020;letter-spacing:0.5px;">13656</div>
<div class="t" style="left:190.50px;top:498.29px;font-size:16.4px;font-weight:normal;color:#1e2a34;letter-spacing:0.5px;">Ібупрофен таб.200мг №50 (Вітаміни) б/ПДВ</div>
<svg class="r" style="left:1303.50px;top:495.37px" width="21" height="21" viewBox="0 0 21 21"><rect x="1.2" y="1.2" width="18.6" height="18.6" fill="none" stroke="#3c3c3c" stroke-width="2"/><path d="M5 10.5 L8.7 14.5 L16 5.5" fill="none" stroke="#3c3c3c" stroke-width="1.7"/></svg>
<div class="t" style="left:1381.00px;top:498.29px;font-size:16.4px;font-weight:normal;color:#202020;letter-spacing:0.5px;">4823008902482</div>
<svg class="r" style="left:1579.50px;top:495.37px" width="21" height="21" viewBox="0 0 21 21"><rect x="1.2" y="1.2" width="18.6" height="18.6" fill="none" stroke="#3c3c3c" stroke-width="2"/><path d="M5 10.5 L8.7 14.5 L16 5.5" fill="none" stroke="#3c3c3c" stroke-width="1.7"/></svg>
<div class="t" style="left:1638.50px;top:498.29px;font-size:16.4px;font-weight:normal;color:#202020;letter-spacing:0.5px;">Національний...</div>
<div class="t" style="left:1775.50px;top:498.29px;font-size:16.4px;font-weight:normal;color:#202020;letter-spacing:0.5px;">Н.П.</div>
<div class="t" style="left:1898.50px;top:498.29px;font-size:16.4px;font-weight:normal;color:#202020;letter-spacing:0.8px;">15.10.2020 15:20</div>
<div class="r" style="left:7.00px;top:521.20px;width:17.00px;height:29.83px;background:#f0f0f0"></div>
<div class="r" style="left:187.00px;top:521.20px;width:434.60px;height:29.83px;background:#c5ebfd"></div>
<div class="r" style="left:621.60px;top:521.20px;width:115.90px;height:29.83px;background:#fff200"></div>
<div class="r" style="left:1376.20px;top:521.20px;width:166.80px;height:29.83px;background:#ffa49a"></div>
<div class="t" style="left:28.00px;top:528.12px;font-size:16.4px;font-weight:normal;color:#202020;letter-spacing:0.5px;">18893</div>
<div class="t" style="left:94.50px;top:528.12px;font-size:16.4px;font-weight:normal;color:#202020;letter-spacing:0.5px;">44761</div>
<div class="t" style="left:190.50px;top:528.12px;font-size:16.4px;font-weight:normal;color:#1e2a34;letter-spacing:0.5px;">Ібупрофен таб.200мг №50 (Технолог)</div>
<svg class="r" style="left:1303.50px;top:525.20px" width="21" height="21" viewBox="0 0 21 21"><rect x="1.2" y="1.2" width="18.6" height="18.6" fill="none" stroke="#3c3c3c" stroke-width="2"/><path d="M5 10.5 L8.7 14.5 L16 5.5" fill="none" stroke="#3c3c3c" stroke-width="1.7"/></svg>
<div class="t" style="left:1381.00px;top:528.12px;font-size:16.4px;font-weight:normal;color:#5c1212;letter-spacing:0.5px;">4820022241177</div>
<svg class="r" style="left:1579.50px;top:525.20px" width="21" height="21" viewBox="0 0 21 21"><rect x="1.2" y="1.2" width="18.6" height="18.6" fill="none" stroke="#3c3c3c" stroke-width="2"/><path d="M5 10.5 L8.7 14.5 L16 5.5" fill="none" stroke="#3c3c3c" stroke-width="1.7"/></svg>
<div class="t" style="left:1638.50px;top:528.12px;font-size:16.4px;font-weight:normal;color:#202020;letter-spacing:0.5px;">Національний...</div>
<div class="t" style="left:1775.50px;top:528.12px;font-size:16.4px;font-weight:normal;color:#202020;letter-spacing:0.5px;">Н.П.</div>
<div class="t" style="left:1898.50px;top:528.12px;font-size:16.4px;font-weight:normal;color:#202020;letter-spacing:0.8px;">12.11.2020 9:20</div>
<div class="r" style="left:7.00px;top:551.03px;width:17.00px;height:29.83px;background:#f0f0f0"></div>
<div class="r" style="left:187.00px;top:551.03px;width:434.60px;height:29.83px;background:#c5ebfd"></div>
<div class="r" style="left:621.60px;top:551.03px;width:115.90px;height:29.83px;background:#fff200"></div>
<div class="r" style="left:1376.20px;top:551.03px;width:166.80px;height:29.83px;background:#ffa49a"></div>
<div class="t" style="left:28.00px;top:557.95px;font-size:16.4px;font-weight:normal;color:#202020;letter-spacing:0.5px;">3501</div>
<div class="t" style="left:94.50px;top:557.95px;font-size:16.4px;font-weight:normal;color:#202020;letter-spacing:0.5px;">44761</div>
<div class="t" style="left:190.50px;top:557.95px;font-size:16.4px;font-weight:normal;color:#1e2a34;letter-spacing:0.5px;">Ібупрофен таб.200мг №50 (Технолог)</div>
<svg class="r" style="left:1303.50px;top:555.03px" width="21" height="21" viewBox="0 0 21 21"><rect x="1.2" y="1.2" width="18.6" height="18.6" fill="none" stroke="#3c3c3c" stroke-width="2"/><path d="M5 10.5 L8.7 14.5 L16 5.5" fill="none" stroke="#3c3c3c" stroke-width="1.7"/></svg>
<div class="t" style="left:1381.00px;top:557.95px;font-size:16.4px;font-weight:normal;color:#5c1212;letter-spacing:0.5px;">4820022244161</div>
<svg class="r" style="left:1579.50px;top:555.03px" width="21" height="21" viewBox="0 0 21 21"><rect x="1.2" y="1.2" width="18.6" height="18.6" fill="none" stroke="#3c3c3c" stroke-width="2"/><path d="M5 10.5 L8.7 14.5 L16 5.5" fill="none" stroke="#3c3c3c" stroke-width="1.7"/></svg>
<div class="t" style="left:1638.50px;top:557.95px;font-size:16.4px;font-weight:normal;color:#202020;letter-spacing:0.5px;">Національний...</div>
<div class="t" style="left:1775.50px;top:557.95px;font-size:16.4px;font-weight:normal;color:#202020;letter-spacing:0.5px;">Н.П.</div>
<div class="t" style="left:1898.50px;top:557.95px;font-size:16.4px;font-weight:normal;color:#202020;letter-spacing:0.8px;">11.08.2017 21:18</div>
<div class="r" style="left:7.00px;top:580.86px;width:17.00px;height:29.83px;background:#f0f0f0"></div>
<div class="r" style="left:187.00px;top:580.86px;width:434.60px;height:29.83px;background:#c5ebfd"></div>
<div class="r" style="left:621.60px;top:580.86px;width:115.90px;height:29.83px;background:#fff200"></div>
<div class="r" style="left:1376.20px;top:580.86px;width:166.80px;height:29.83px;background:#ffa49a"></div>
<div class="t" style="left:28.00px;top:587.78px;font-size:16.4px;font-weight:normal;color:#202020;letter-spacing:0.5px;">37223</div>
<div class="t" style="left:94.50px;top:587.78px;font-size:16.4px;font-weight:normal;color:#202020;letter-spacing:0.5px;"></div>
<div class="t" style="left:190.50px;top:587.78px;font-size:16.4px;font-weight:normal;color:#1e2a34;letter-spacing:0.5px;">Ібупрофен таб.400мг №10</div>
<div class="t" style="left:625.00px;top:587.78px;font-size:16.4px;font-weight:normal;color:#2a2a00;letter-spacing:0.5px;">8,0000</div>
<svg class="r" style="left:1303.50px;top:584.86px" width="21" height="21" viewBox="0 0 21 21"><rect x="1.2" y="1.2" width="18.6" height="18.6" fill="none" stroke="#3c3c3c" stroke-width="2"/><path d="M5 10.5 L8.7 14.5 L16 5.5" fill="none" stroke="#3c3c3c" stroke-width="1.7"/></svg>
<div class="t" style="left:1381.00px;top:587.78px;font-size:16.4px;font-weight:normal;color:#5c1212;letter-spacing:0.5px;">4820022243133</div>
<svg class="r" style="left:1579.50px;top:584.86px" width="21" height="21" viewBox="0 0 21 21"><rect x="1.2" y="1.2" width="18.6" height="18.6" fill="none" stroke="#3c3c3c" stroke-width="2"/><path d="M5 10.5 L8.7 14.5 L16 5.5" fill="none" stroke="#3c3c3c" stroke-width="1.7"/></svg>
<div class="t" style="left:1638.50px;top:587.78px;font-size:16.4px;font-weight:normal;color:#202020;letter-spacing:0.5px;">Національний...</div>
<div class="t" style="left:1898.50px;top:587.78px;font-size:16.4px;font-weight:normal;color:#202020;letter-spacing:0.8px;">20.10.2025 18:20</div>
<div class="r" style="left:7.00px;top:610.69px;width:17.00px;height:29.83px;background:#f0f0f0"></div>
<div class="r" style="left:187.00px;top:610.69px;width:434.60px;height:29.83px;background:#c5ebfd"></div>
<div class="r" style="left:621.60px;top:610.69px;width:115.90px;height:29.83px;background:#fff200"></div>
<div class="r" style="left:1376.20px;top:610.69px;width:166.80px;height:29.83px;background:#ffa49a"></div>
<div class="t" style="left:28.00px;top:617.61px;font-size:16.4px;font-weight:normal;color:#202020;letter-spacing:0.5px;">34658</div>
<div class="t" style="left:94.50px;top:617.61px;font-size:16.4px;font-weight:normal;color:#202020;letter-spacing:0.5px;"></div>
<div class="t" style="left:190.50px;top:617.61px;font-size:16.4px;font-weight:normal;color:#1e2a34;letter-spacing:0.5px;">Ібупрофен таб.400мг №20 (10х2)</div>
<div class="t" style="left:625.00px;top:617.61px;font-size:16.4px;font-weight:normal;color:#2a2a00;letter-spacing:0.5px;">9,5000</div>
<svg class="r" style="left:1303.50px;top:614.69px" width="21" height="21" viewBox="0 0 21 21"><rect x="1.2" y="1.2" width="18.6" height="18.6" fill="none" stroke="#3c3c3c" stroke-width="2"/><path d="M5 10.5 L8.7 14.5 L16 5.5" fill="none" stroke="#3c3c3c" stroke-width="1.7"/></svg>
<div class="t" style="left:1381.00px;top:617.61px;font-size:16.4px;font-weight:normal;color:#5c1212;letter-spacing:0.5px;">4820022243140</div>
<svg class="r" style="left:1579.50px;top:614.69px" width="21" height="21" viewBox="0 0 21 21"><rect x="1.2" y="1.2" width="18.6" height="18.6" fill="none" stroke="#3c3c3c" stroke-width="2"/><path d="M5 10.5 L8.7 14.5 L16 5.5" fill="none" stroke="#3c3c3c" stroke-width="1.7"/></svg>
<div class="t" style="left:1638.50px;top:617.61px;font-size:16.4px;font-weight:normal;color:#202020;letter-spacing:0.5px;">Національний...</div>
<div class="t" style="left:1775.50px;top:617.61px;font-size:16.4px;font-weight:normal;color:#202020;letter-spacing:0.5px;">Н.П.</div>
<div class="t" style="left:1898.50px;top:617.61px;font-size:16.4px;font-weight:normal;color:#202020;letter-spacing:0.8px;">28.03.2025 13:20</div>
<div class="r" style="left:7.00px;top:640.52px;width:17.00px;height:29.83px;background:#f0f0f0"></div>
<div class="r" style="left:187.00px;top:640.52px;width:434.60px;height:29.83px;background:#c5ebfd"></div>
<div class="r" style="left:621.60px;top:640.52px;width:115.90px;height:29.83px;background:#fff200"></div>
<div class="r" style="left:1376.20px;top:640.52px;width:166.80px;height:29.83px;background:#ffa49a"></div>
<div class="t" style="left:28.00px;top:647.44px;font-size:16.4px;font-weight:normal;color:#202020;letter-spacing:0.5px;">25866</div>
<div class="t" style="left:94.50px;top:647.44px;font-size:16.4px;font-weight:normal;color:#202020;letter-spacing:0.5px;">630864</div>
<div class="t" style="left:190.50px;top:647.44px;font-size:16.4px;font-weight:normal;color:#1e2a34;letter-spacing:0.5px;">Ібупрофен таб.400мг №50</div>
<svg class="r" style="left:1303.50px;top:644.52px" width="21" height="21" viewBox="0 0 21 21"><rect x="1.2" y="1.2" width="18.6" height="18.6" fill="none" stroke="#3c3c3c" stroke-width="2"/><path d="M5 10.5 L8.7 14.5 L16 5.5" fill="none" stroke="#3c3c3c" stroke-width="1.7"/></svg>
<div class="t" style="left:1381.00px;top:647.44px;font-size:16.4px;font-weight:normal;color:#5c1212;letter-spacing:0.5px;">4820022243157</div>
<svg class="r" style="left:1579.50px;top:644.52px" width="21" height="21" viewBox="0 0 21 21"><rect x="1.2" y="1.2" width="18.6" height="18.6" fill="none" stroke="#3c3c3c" stroke-width="2"/><path d="M5 10.5 L8.7 14.5 L16 5.5" fill="none" stroke="#3c3c3c" stroke-width="1.7"/></svg>
<div class="t" style="left:1638.50px;top:647.44px;font-size:16.4px;font-weight:normal;color:#202020;letter-spacing:0.5px;">Національний...</div>
<div class="t" style="left:1775.50px;top:647.44px;font-size:16.4px;font-weight:normal;color:#202020;letter-spacing:0.5px;">Н.П.</div>
<div class="t" style="left:1898.50px;top:647.44px;font-size:16.4px;font-weight:normal;color:#202020;letter-spacing:0.8px;">24.05.2022 22:20</div>
<div class="r" style="left:7.00px;top:670.35px;width:17.00px;height:29.83px;background:#f0f0f0"></div>
<div class="r" style="left:187.00px;top:670.35px;width:434.60px;height:29.83px;background:#c5ebfd"></div>
<div class="r" style="left:621.60px;top:670.35px;width:115.90px;height:29.83px;background:#fff200"></div>
<div class="r" style="left:1376.20px;top:670.35px;width:166.80px;height:29.83px;background:#ffa49a"></div>
<div class="t" style="left:28.00px;top:677.27px;font-size:16.4px;font-weight:normal;color:#202020;letter-spacing:0.5px;">21902</div>
<div class="t" style="left:94.50px;top:677.27px;font-size:16.4px;font-weight:normal;color:#202020;letter-spacing:0.5px;">716751</div>
<div class="t" style="left:190.50px;top:677.27px;font-size:16.4px;font-weight:normal;color:#1e2a34;letter-spacing:0.5px;">Ібупрофен-Здоров&#x27;я капс.200мг №10</div>
<svg class="r" style="left:1303.50px;top:674.35px" width="21" height="21" viewBox="0 0 21 21"><rect x="1.2" y="1.2" width="18.6" height="18.6" fill="none" stroke="#3c3c3c" stroke-width="2"/><path d="M5 10.5 L8.7 14.5 L16 5.5" fill="none" stroke="#3c3c3c" stroke-width="1.7"/></svg>
<div class="t" style="left:1381.00px;top:677.27px;font-size:16.4px;font-weight:normal;color:#5c1212;letter-spacing:0.5px;">4820135589722</div>
<svg class="r" style="left:1579.50px;top:674.35px" width="21" height="21" viewBox="0 0 21 21"><rect x="1.2" y="1.2" width="18.6" height="18.6" fill="none" stroke="#3c3c3c" stroke-width="2"/><path d="M5 10.5 L8.7 14.5 L16 5.5" fill="none" stroke="#3c3c3c" stroke-width="1.7"/></svg>
<div class="t" style="left:1638.50px;top:677.27px;font-size:16.4px;font-weight:normal;color:#202020;letter-spacing:0.5px;">Національний...</div>
<div class="t" style="left:1775.50px;top:677.27px;font-size:16.4px;font-weight:normal;color:#202020;letter-spacing:0.5px;">Н.П.</div>
<div class="t" style="left:1898.50px;top:677.27px;font-size:16.4px;font-weight:normal;color:#202020;letter-spacing:0.8px;">30.04.2021 9:00</div>
<div class="r" style="left:7.00px;top:700.18px;width:17.00px;height:29.83px;background:#f0f0f0"></div>
<div class="r" style="left:187.00px;top:700.18px;width:434.60px;height:29.83px;background:#c5ebfd"></div>
<div class="r" style="left:621.60px;top:700.18px;width:115.90px;height:29.83px;background:#fff200"></div>
<div class="r" style="left:1376.20px;top:700.18px;width:166.80px;height:29.83px;background:#ffa49a"></div>
<div class="t" style="left:28.00px;top:707.10px;font-size:16.4px;font-weight:normal;color:#202020;letter-spacing:0.5px;">21898</div>
<div class="t" style="left:94.50px;top:707.10px;font-size:16.4px;font-weight:normal;color:#202020;letter-spacing:0.5px;">716755</div>
<div class="t" style="left:190.50px;top:707.10px;font-size:16.4px;font-weight:normal;color:#1e2a34;letter-spacing:0.5px;">Ібупрофен-Здоров&#x27;я капс.400мг №10</div>
<svg class="r" style="left:1303.50px;top:704.18px" width="21" height="21" viewBox="0 0 21 21"><rect x="1.2" y="1.2" width="18.6" height="18.6" fill="none" stroke="#3c3c3c" stroke-width="2"/><path d="M5 10.5 L8.7 14.5 L16 5.5" fill="none" stroke="#3c3c3c" stroke-width="1.7"/></svg>
<div class="t" style="left:1381.00px;top:707.10px;font-size:16.4px;font-weight:normal;color:#5c1212;letter-spacing:0.5px;">4820135589746</div>
<svg class="r" style="left:1579.50px;top:704.18px" width="21" height="21" viewBox="0 0 21 21"><rect x="1.2" y="1.2" width="18.6" height="18.6" fill="none" stroke="#3c3c3c" stroke-width="2"/><path d="M5 10.5 L8.7 14.5 L16 5.5" fill="none" stroke="#3c3c3c" stroke-width="1.7"/></svg>
<div class="t" style="left:1638.50px;top:707.10px;font-size:16.4px;font-weight:normal;color:#202020;letter-spacing:0.5px;">Національний...</div>
<div class="t" style="left:1775.50px;top:707.10px;font-size:16.4px;font-weight:normal;color:#202020;letter-spacing:0.5px;">Н.П.</div>
<div class="t" style="left:1898.50px;top:707.10px;font-size:16.4px;font-weight:normal;color:#202020;letter-spacing:0.8px;">29.04.2021 22:20</div>
<div class="r" style="left:7.00px;top:730.01px;width:17.00px;height:29.83px;background:#f0f0f0"></div>
<div class="r" style="left:187.00px;top:730.01px;width:434.60px;height:29.83px;background:#c5ebfd"></div>
<div class="r" style="left:621.60px;top:730.01px;width:115.90px;height:29.83px;background:#fff200"></div>
<div class="r" style="left:1376.20px;top:730.01px;width:166.80px;height:29.83px;background:#ffa49a"></div>
<div class="t" style="left:28.00px;top:736.93px;font-size:16.4px;font-weight:normal;color:#202020;letter-spacing:0.5px;">31357</div>
<div class="t" style="left:94.50px;top:736.93px;font-size:16.4px;font-weight:normal;color:#202020;letter-spacing:0.5px;">0</div>
<div class="t" style="left:190.50px;top:736.93px;font-size:16.4px;font-weight:normal;color:#1e2a34;letter-spacing:0.5px;">Ібупрофен-Здоров&#x27;я капс.400мг №20 (10х2)</div>
<svg class="r" style="left:1303.50px;top:734.01px" width="21" height="21" viewBox="0 0 21 21"><rect x="1.2" y="1.2" width="18.6" height="18.6" fill="none" stroke="#3c3c3c" stroke-width="2"/><path d="M5 10.5 L8.7 14.5 L16 5.5" fill="none" stroke="#3c3c3c" stroke-width="1.7"/></svg>
<div class="t" style="left:1381.00px;top:736.93px;font-size:16.4px;font-weight:normal;color:#5c1212;letter-spacing:0.5px;">4820135589753</div>
<svg class="r" style="left:1579.50px;top:734.01px" width="21" height="21" viewBox="0 0 21 21"><rect x="1.2" y="1.2" width="18.6" height="18.6" fill="none" stroke="#3c3c3c" stroke-width="2"/><path d="M5 10.5 L8.7 14.5 L16 5.5" fill="none" stroke="#3c3c3c" stroke-width="1.7"/></svg>
<div class="t" style="left:1638.50px;top:736.93px;font-size:16.4px;font-weight:normal;color:#202020;letter-spacing:0.5px;">Національний...</div>
<div class="t" style="left:1775.50px;top:736.93px;font-size:16.4px;font-weight:normal;color:#202020;letter-spacing:0.5px;">Н.П.</div>
<div class="t" style="left:1898.50px;top:736.93px;font-size:16.4px;font-weight:normal;color:#202020;letter-spacing:0.8px;">17.02.2024 8:50</div>
<div class="r" style="left:7.00px;top:252.00px;width:2008.00px;height:2.00px;background:rgba(90,90,90,0.40)"></div>
<div class="r" style="left:7.00px;top:281.00px;width:2008.00px;height:2.00px;background:rgba(90,90,90,0.40)"></div>
<div class="r" style="left:7.00px;top:311.00px;width:2008.00px;height:2.00px;background:rgba(90,90,90,0.40)"></div>
<div class="r" style="left:7.00px;top:341.00px;width:2008.00px;height:2.00px;background:rgba(90,90,90,0.40)"></div>
<div class="r" style="left:7.00px;top:371.00px;width:2008.00px;height:2.00px;background:rgba(90,90,90,0.40)"></div>
<div class="r" style="left:7.00px;top:401.00px;width:2008.00px;height:2.00px;background:rgba(90,90,90,0.40)"></div>
<div class="r" style="left:7.00px;top:431.00px;width:2008.00px;height:2.00px;background:rgba(90,90,90,0.40)"></div>
<div class="r" style="left:7.00px;top:460.00px;width:2008.00px;height:2.00px;background:rgba(90,90,90,0.40)"></div>
<div class="r" style="left:7.00px;top:490.00px;width:2008.00px;height:2.00px;background:rgba(90,90,90,0.40)"></div>
<div class="r" style="left:7.00px;top:520.00px;width:2008.00px;height:2.00px;background:rgba(90,90,90,0.40)"></div>
<div class="r" style="left:7.00px;top:550.00px;width:2008.00px;height:2.00px;background:rgba(90,90,90,0.40)"></div>
<div class="r" style="left:7.00px;top:580.00px;width:2008.00px;height:2.00px;background:rgba(90,90,90,0.40)"></div>
<div class="r" style="left:7.00px;top:609.00px;width:2008.00px;height:2.00px;background:rgba(90,90,90,0.40)"></div>
<div class="r" style="left:7.00px;top:639.00px;width:2008.00px;height:2.00px;background:rgba(90,90,90,0.40)"></div>
<div class="r" style="left:7.00px;top:669.00px;width:2008.00px;height:2.00px;background:rgba(90,90,90,0.40)"></div>
<div class="r" style="left:7.00px;top:699.00px;width:2008.00px;height:2.00px;background:rgba(90,90,90,0.40)"></div>
<div class="r" style="left:7.00px;top:729.00px;width:2008.00px;height:2.00px;background:rgba(90,90,90,0.40)"></div>
<div class="r" style="left:7.00px;top:759.00px;width:2008.00px;height:2.00px;background:rgba(90,90,90,0.40)"></div>
<svg class="r" style="left:11px;top:498.87px" width="12" height="15" viewBox="0 0 12 15"><path d="M2 2 L9.5 7.5 L2 13 Z" fill="none" stroke="#3a3a3a" stroke-width="1.7" stroke-dasharray="2.2 1"/><circle cx="4" cy="7.5" r="1.3" fill="#333"/></svg>
<div class="r" style="left:24.00px;top:222.90px;width:1.00px;height:536.94px;background:rgba(90,90,90,0.62)"></div>
<div class="r" style="left:92.00px;top:222.90px;width:1.00px;height:536.94px;background:rgba(90,90,90,0.62)"></div>
<div class="r" style="left:187.00px;top:222.90px;width:1.00px;height:536.94px;background:rgba(90,90,90,0.62)"></div>
<div class="r" style="left:622.00px;top:222.90px;width:1.00px;height:536.94px;background:rgba(90,90,90,0.62)"></div>
<div class="r" style="left:738.00px;top:222.90px;width:1.00px;height:536.94px;background:rgba(90,90,90,0.62)"></div>
<div class="r" style="left:864.00px;top:222.90px;width:1.00px;height:536.94px;background:rgba(90,90,90,0.62)"></div>
<div class="r" style="left:1028.00px;top:222.90px;width:1.00px;height:536.94px;background:rgba(90,90,90,0.62)"></div>
<div class="r" style="left:1152.00px;top:222.90px;width:1.00px;height:536.94px;background:rgba(90,90,90,0.62)"></div>
<div class="r" style="left:1251.00px;top:222.90px;width:1.00px;height:536.94px;background:rgba(90,90,90,0.62)"></div>
<div class="r" style="left:1376.00px;top:222.90px;width:1.00px;height:536.94px;background:rgba(90,90,90,0.62)"></div>
<div class="r" style="left:1543.00px;top:222.90px;width:1.00px;height:536.94px;background:rgba(90,90,90,0.62)"></div>
<div class="r" style="left:1637.00px;top:222.90px;width:1.00px;height:536.94px;background:rgba(90,90,90,0.62)"></div>
<div class="r" style="left:1774.00px;top:222.90px;width:1.00px;height:536.94px;background:rgba(90,90,90,0.62)"></div>
<div class="r" style="left:1895.00px;top:222.90px;width:1.00px;height:536.94px;background:rgba(90,90,90,0.62)"></div>
<div class="r" style="left:698px;top:295.2px;width:623.00px;height:813.00px;background:#f3f3f1;border:1px solid #6e6e6e;border-width:1px 2px 2px 1.5px;box-sizing:border-box;box-shadow:1px 7px 24px rgba(0,0,0,0.28)"></div>
<div class="r" style="left:699.00px;top:296.20px;width:619.50px;height:38.30px;background:#fefefe"></div>
<div class="r" style="left:699.00px;top:334.50px;width:619.50px;height:36.00px;background:linear-gradient(#f6f6f6,#eeeeee)"></div>
<div class="r" style="left:699.00px;top:370.30px;width:619.50px;height:1.60px;background:#c8c8c8"></div>
<div class="r" style="left:699.00px;top:371.90px;width:619.50px;height:28.80px;background:#e6e6e6"></div>
<div class="r" style="left:699.00px;top:400.70px;width:619.50px;height:1.60px;background:#c9c9c9"></div>
<div class="t" style="left:704.00px;top:305.09px;font-size:18.2px;font-weight:normal;color:#262626;letter-spacing:0px;">Завантаження довідника товарів</div>
<svg class="r" style="left:1287px;top:306px" width="18" height="18" viewBox="0 0 18 18"><path d="M1 1 L17 17 M17 1 L1 17" stroke="#2a2a2a" stroke-width="1.6"/></svg>
<svg class="r" style="left:707px;top:339px" width="22" height="27" viewBox="0 0 22 27"><path d="M1 1 L21 13.5 L1 26 Z" fill="#6d9fe6"/><path d="M2 3 L18 13.5 L2 14 Z" fill="#9cc0f2" opacity=".6"/></svg>
<div class="t" style="left:736.00px;top:343.07px;font-size:17.4px;font-weight:normal;color:#1e1e1e;letter-spacing:0px;">Старт</div>
<svg class="r" style="left:797px;top:341px" width="23" height="23" viewBox="0 0 23 23"><rect x="1" y="1" width="9" height="21" fill="#c4c4c4"/><rect x="12" y="1" width="9" height="21" fill="#c4c4c4"/></svg>
<div class="t" style="left:826.50px;top:343.07px;font-size:17.4px;font-weight:normal;color:#9c9c9c;letter-spacing:0px;">Стоп</div>
<div class="t" style="left:708.50px;width:600px;text-align:center;top:378.27px;font-size:17.4px;font-weight:normal;color:#1e1e1e;letter-spacing:0px">0 %</div>
<div class="t" style="left:700.20px;top:424.76px;font-size:18px;font-weight:bold;color:#161616;letter-spacing:0.53px;">Почніть завантаження натисканням кнопки &quot;Старт&quot;</div>
<div class="r" style="left:712.00px;top:475.00px;width:603.00px;height:1.00px;background:#d6d6d6"></div>
<div class="r" style="left:712.00px;top:476.00px;width:603.00px;height:1.00px;background:#fafafa"></div>
<div class="t" style="left:711.50px;top:467.84px;font-size:17.2px;font-weight:normal;color:#2e3440;letter-spacing:0px;background:#f3f3f1;padding-right:6px">Метод зв&#x27;язування</div>
<svg class="r" style="left:712px;top:505.20px" width="22" height="22" viewBox="0 0 22 22"><circle cx="11" cy="11" r="9.5" fill="#fbfbfb" stroke="#6a6a6a" stroke-width="2"/></svg>
<div class="t" style="left:735.50px;top:508.84px;font-size:17.2px;font-weight:normal;color:#1e1e1e;letter-spacing:0px;">Використовувати хмарні прив&#x27;язки для цієї аптеки</div>
<svg class="r" style="left:712px;top:549.00px" width="22" height="22" viewBox="0 0 22 22"><circle cx="11" cy="11" r="9.5" fill="#fbfbfb" stroke="#6a6a6a" stroke-width="2"/><circle cx="11" cy="11" r="5.6" fill="#2e2e2e"/></svg>
<div class="t" style="left:735.50px;top:552.64px;font-size:17.2px;font-weight:normal;color:#1e1e1e;letter-spacing:0px;">Використовувати хмарні прив&#x27;язки для головного офісу</div>
<svg class="r" style="left:712px;top:593.00px" width="22" height="22" viewBox="0 0 22 22"><circle cx="11" cy="11" r="9.5" fill="#fbfbfb" stroke="#6a6a6a" stroke-width="2"/></svg>
<div class="t" style="left:735.50px;top:596.64px;font-size:17.2px;font-weight:normal;color:#1e1e1e;letter-spacing:0px;">Використати код Моріон</div>
<div class="r" style="left:700.00px;top:628.00px;width:614.00px;height:1.00px;background:#d6d6d6"></div>
<div class="r" style="left:700.00px;top:629.00px;width:614.00px;height:1.00px;background:#fafafa"></div>
<div class="r" style="left:712.00px;top:641.00px;width:603.00px;height:1.00px;background:#d6d6d6"></div>
<div class="r" style="left:712.00px;top:642.00px;width:603.00px;height:1.00px;background:#fafafa"></div>
<div class="t" style="left:711.50px;top:633.94px;font-size:17.2px;font-weight:normal;color:#2e3440;letter-spacing:0px;background:#f3f3f1;padding-right:6px">Метод оновлення</div>
<svg class="r" style="left:712px;top:671.80px" width="22" height="22" viewBox="0 0 22 22"><circle cx="11" cy="11" r="9.5" fill="#fbfbfb" stroke="#6a6a6a" stroke-width="2"/></svg>
<div class="t" style="left:735.50px;top:675.44px;font-size:17.2px;font-weight:normal;color:#1e1e1e;letter-spacing:0px;">Оновлювати тільки незаповнені назви</div>
<svg class="r" style="left:712px;top:718.30px" width="22" height="22" viewBox="0 0 22 22"><circle cx="11" cy="11" r="9.5" fill="#fbfbfb" stroke="#6a6a6a" stroke-width="2"/><circle cx="11" cy="11" r="5.6" fill="#2e2e2e"/></svg>
<div class="t" style="left:735.50px;top:721.94px;font-size:17.2px;font-weight:normal;color:#1e1e1e;letter-spacing:0px;">Оновлювати весь довідник</div>
<div class="r" style="left:700.00px;top:756.00px;width:614.00px;height:1.00px;background:#d6d6d6"></div>
<div class="r" style="left:700.00px;top:757.00px;width:614.00px;height:1.00px;background:#fafafa"></div>
<div class="r" style="left:712.00px;top:767.00px;width:603.00px;height:1.00px;background:#d6d6d6"></div>
<div class="r" style="left:712.00px;top:768.00px;width:603.00px;height:1.00px;background:#fafafa"></div>
<div class="t" style="left:711.50px;top:760.44px;font-size:17.2px;font-weight:normal;color:#2e3440;letter-spacing:0px;background:#f3f3f1;padding-right:6px">Поля для оновлення</div>
<svg class="r" style="left:710.5px;top:792.20px" width="21" height="21" viewBox="0 0 21 21"><rect x="1.2" y="1.2" width="18.6" height="18.6" fill="#fbfcfd" stroke="#484848" stroke-width="1.8"/></svg>
<div class="t" style="left:734.50px;top:796.34px;font-size:17.2px;font-weight:normal;color:#1e1e1e;letter-spacing:0px;">Українські назви товарів</div>
<svg class="r" style="left:710.5px;top:826.70px" width="21" height="21" viewBox="0 0 21 21"><rect x="1.2" y="1.2" width="18.6" height="18.6" fill="#fbfcfd" stroke="#484848" stroke-width="1.8"/></svg>
<div class="t" style="left:734.50px;top:830.84px;font-size:17.2px;font-weight:normal;color:#1e1e1e;letter-spacing:0px;">Коди Моріон</div>
<svg class="r" style="left:710.5px;top:861.10px" width="21" height="21" viewBox="0 0 21 21"><rect x="1.2" y="1.2" width="18.6" height="18.6" fill="#fbfcfd" stroke="#484848" stroke-width="1.8"/></svg>
<div class="t" style="left:734.50px;top:865.24px;font-size:17.2px;font-weight:normal;color:#1e1e1e;letter-spacing:0px;">Ознака рецептурності</div>
<svg class="r" style="left:710.5px;top:895.20px" width="21" height="21" viewBox="0 0 21 21"><rect x="1.2" y="1.2" width="18.6" height="18.6" fill="#fbfcfd" stroke="#484848" stroke-width="1.8"/></svg>
<div class="t" style="left:734.50px;top:899.34px;font-size:17.2px;font-weight:normal;color:#1e1e1e;letter-spacing:0px;">Підписати національний список</div>
<svg class="r" style="left:710.5px;top:927.90px" width="21" height="21" viewBox="0 0 21 21"><rect x="1.2" y="1.2" width="18.6" height="18.6" fill="#fbfcfd" stroke="#484848" stroke-width="1.8"/></svg>
<div class="t" style="left:734.50px;top:932.04px;font-size:17.2px;font-weight:normal;color:#1e1e1e;letter-spacing:0px;">Оптово-відпускна ціна</div>
<svg class="r" style="left:710.5px;top:960.90px" width="21" height="21" viewBox="0 0 21 21"><rect x="1.2" y="1.2" width="18.6" height="18.6" fill="#fbfcfd" stroke="#484848" stroke-width="1.8"/></svg>
<div class="t" style="left:734.50px;top:965.04px;font-size:17.2px;font-weight:normal;color:#1e1e1e;letter-spacing:0px;">Цінове регулювання</div>
<svg class="r" style="left:710.5px;top:993.50px" width="21" height="21" viewBox="0 0 21 21"><rect x="1.2" y="1.2" width="18.6" height="18.6" fill="#fbfcfd" stroke="#484848" stroke-width="1.8"/><path d="M4.5 10.5 L8.5 14.8 L16.5 5" fill="none" stroke="#4a5866" stroke-width="2"/></svg>
<div class="t" style="left:734.50px;top:997.64px;font-size:17.2px;font-weight:normal;color:#1e1e1e;letter-spacing:0px;">Національний каталог цін</div>
<div class="r" style="left:734.00px;top:994.00px;width:208.00px;height:22.50px;border:1.6px dotted #3a3a3a;box-sizing:border-box"></div>
<div class="r" style="left:700.00px;top:1035.00px;width:614.00px;height:1.00px;background:#d6d6d6"></div>
<div class="r" style="left:700.00px;top:1036.00px;width:614.00px;height:1.00px;background:#fafafa"></div>
<div class="r" style="left:1180.40px;top:1053.60px;width:122.30px;height:35.30px;background:linear-gradient(#f2f2f2,#e2e2e2);border:1px solid #acacac;box-sizing:border-box"></div>
<div class="t" style="left:939.00px;width:600px;text-align:center;top:1062.97px;font-size:17.4px;font-weight:normal;color:#1e1e1e;letter-spacing:0px">Закрити</div>
<div class="r" style="left:702.30px;top:332.40px;width:94.10px;height:39.60px;border:4.1px solid #e40000;box-sizing:border-box;border-radius:2px"></div>
<div class="r" style="left:700.60px;top:536.30px;width:616.00px;height:47.40px;border:4.1px solid #e40000;box-sizing:border-box;border-radius:2px"></div>
<div class="r" style="left:700.60px;top:706.80px;width:618.00px;height:45.90px;border:4.1px solid #e40000;box-sizing:border-box;border-radius:2px"></div>
<div class="r" style="left:700.40px;top:988.80px;width:617.20px;height:38.00px;border:4.1px solid #e40000;box-sizing:border-box;border-radius:2px"></div>
<svg class="r" style="left:0;top:0" width="2015" height="1349" viewBox="0 0 2015 1349"><path d="M1131 306.2 L1131 308.4 L805 351.5 L800.5 346.5 Z" fill="#e00000"/><path d="M811.5 340.8 L798 349 L813 355" fill="none" stroke="#e00000" stroke-width="5" stroke-linecap="round" stroke-linejoin="round"/></svg>
<div class="r" style="left:1458.5px;top:917px;width:98px;height:98px;border-radius:50%;background:#ffee00"></div>
<svg class="r" style="left:1506px;top:965px" width="30" height="44" viewBox="0 0 30 44"><path d="M2 2 L2 34 L9.5 27 L14.5 39 L19 37 L14 25.5 L24.5 25.5 Z" fill="#fff" stroke="#000" stroke-width="1.6" stroke-linejoin="miter"/></svg>
<div class="r" style="left:0.00px;top:0.00px;width:7.00px;height:1349.00px;background:#000"></div>
</div></body></html>
